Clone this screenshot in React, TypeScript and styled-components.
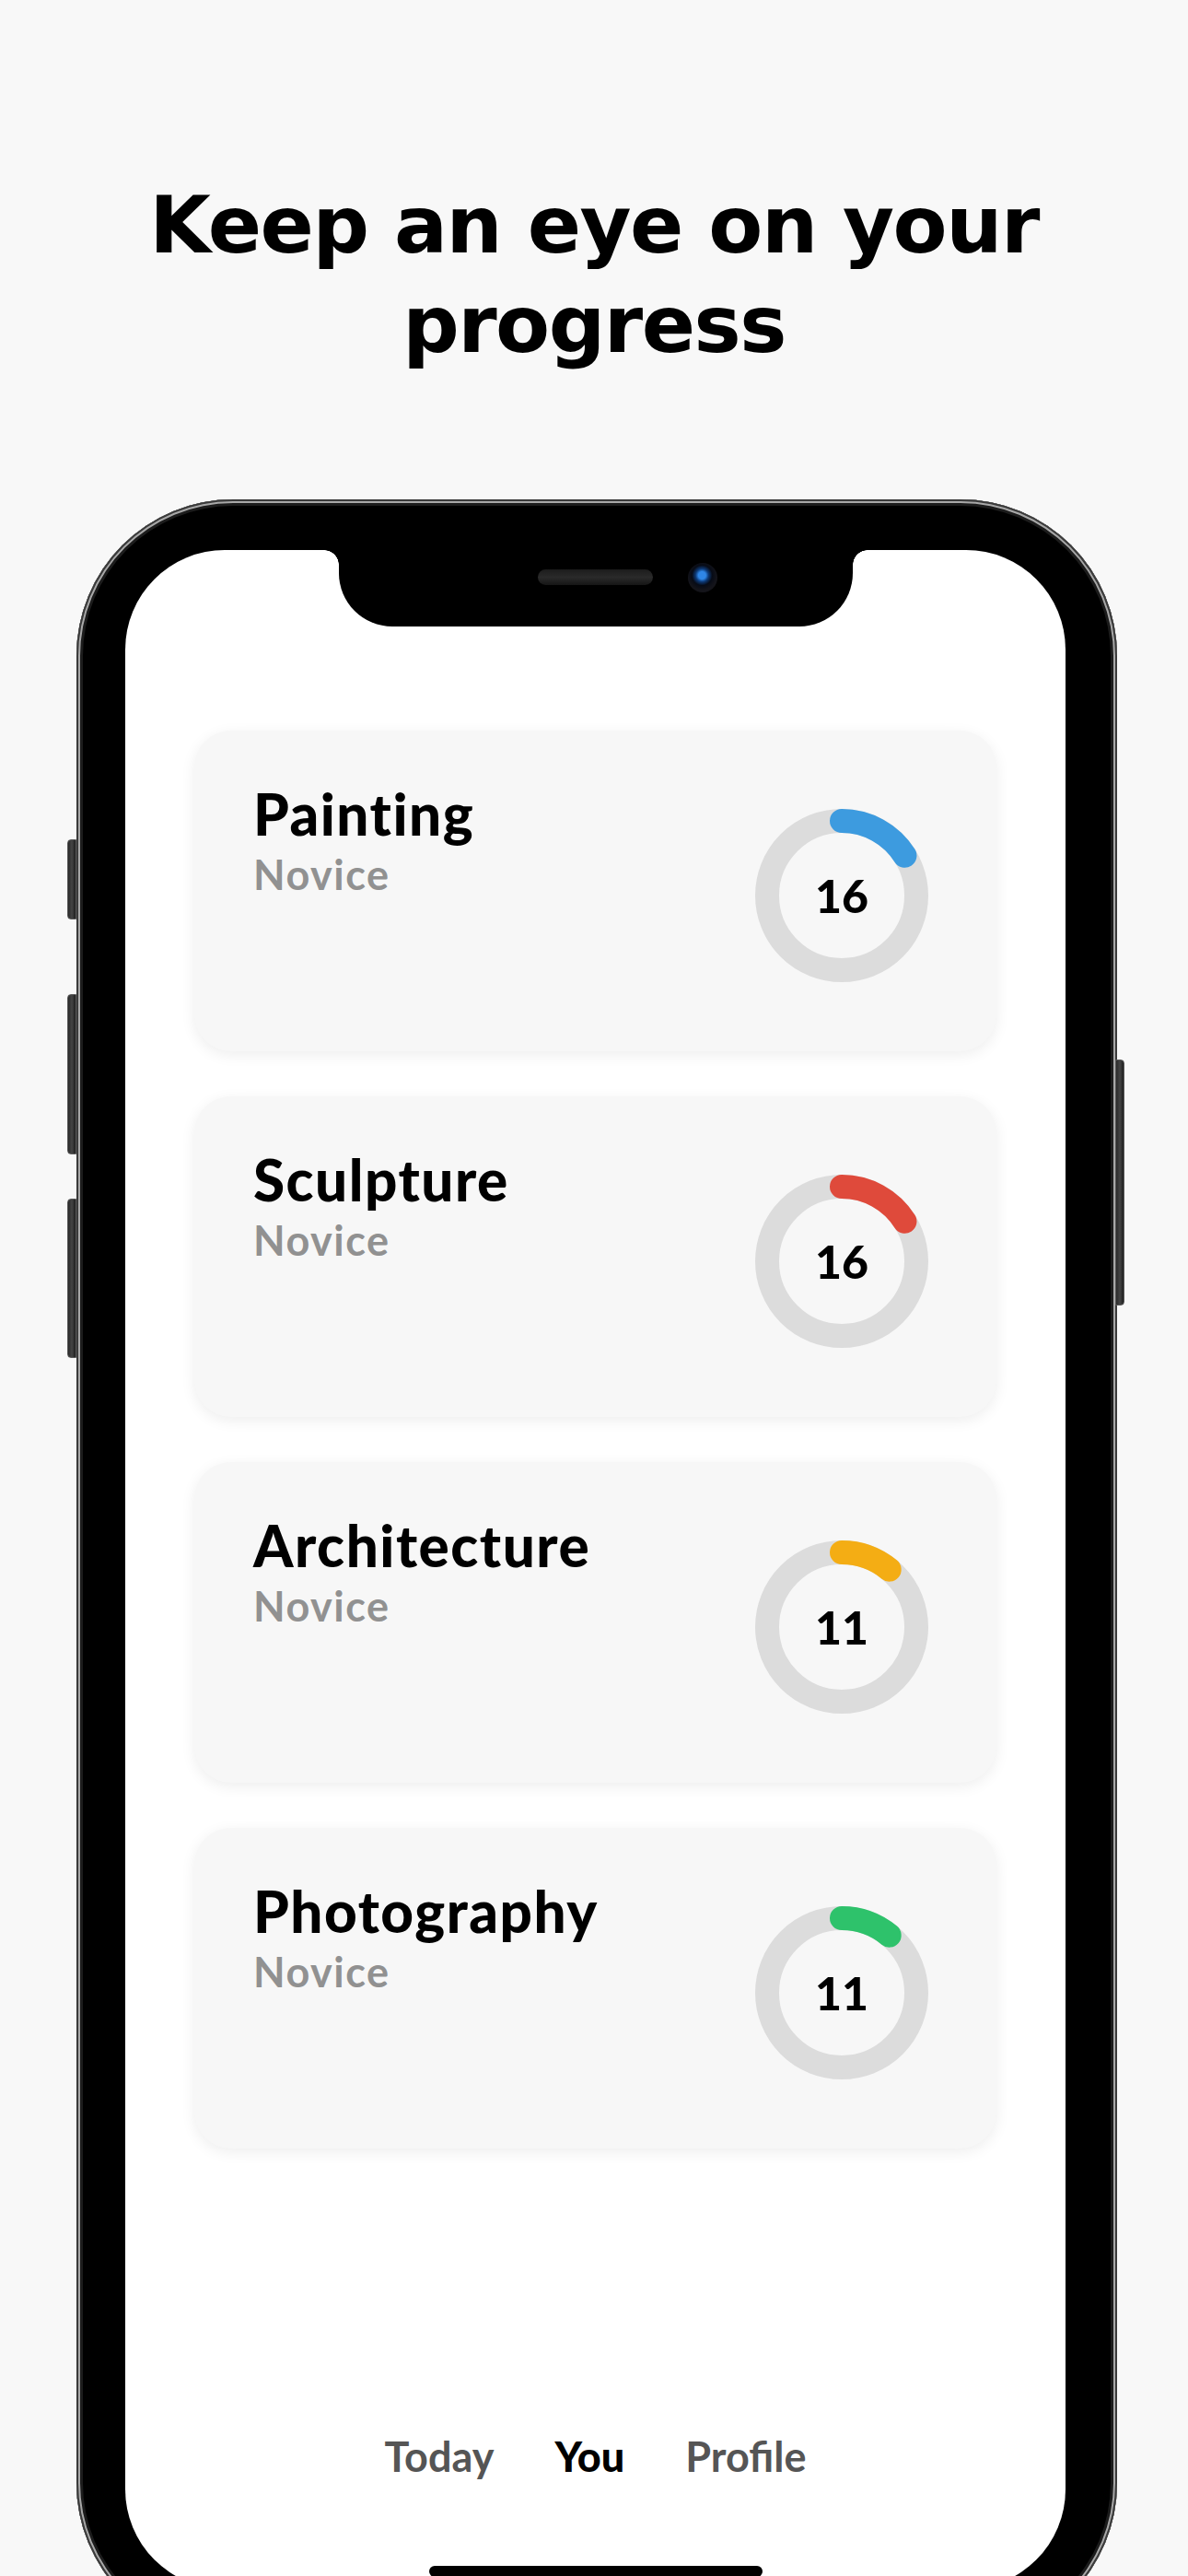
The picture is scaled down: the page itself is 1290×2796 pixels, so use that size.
import styled, {createGlobalStyle} from 'styled-components'

interface Skill {
  name: string
  level: string
  value: number
  color: string
}

const skills: Skill[] = [
  {name: 'Painting', level: 'Novice', value: 16, color: '#3d9bdf'},
  {name: 'Sculpture', level: 'Novice', value: 16, color: '#df4a3b'},
  {name: 'Architecture', level: 'Novice', value: 11, color: '#f4ad14'},
  {name: 'Photography', level: 'Novice', value: 11, color: '#2ec26b'},
]

const tabs = ['Today', 'You', 'Profile']

const RING = 188
const STROKE = 26

const ProgressRing = ({value, color}: {value: number; color: string}) => {
  const r = (RING - STROKE) / 2
  const c = 2 * Math.PI * r
  return (
    <Ring>
      <svg width={RING} height={RING} viewBox={`0 0 ${RING} ${RING}`}>
        <circle cx={RING / 2} cy={RING / 2} r={r} fill="none" stroke="#dcdcdc" strokeWidth={STROKE} />
        <circle
          cx={RING / 2}
          cy={RING / 2}
          r={r}
          fill="none"
          stroke={color}
          strokeWidth={STROKE}
          strokeLinecap="round"
          strokeDasharray={`${(value / 100) * c} ${c}`}
          transform={`rotate(-90 ${RING / 2} ${RING / 2})`}
        />
      </svg>
      <RingValue>{value}</RingValue>
    </Ring>
  )
}

const SkillCard = ({skill}: {skill: Skill}) => (
  <Card>
    <Info>
      <Name>{skill.name}</Name>
      <Level>{skill.level}</Level>
    </Info>
    <ProgressRing value={skill.value} color={skill.color} />
  </Card>
)

export default function App() {
  return (
    <>
      <GlobalStyle />
      <Page>
        <Heading>Keep an eye on your progress</Heading>
        <Phone>
          <SideButton $side="left" $top={369} $height={87} />
          <SideButton $side="left" $top={537} $height={174} />
          <SideButton $side="left" $top={759} $height={173} />
          <SideButton $side="right" $top={608} $height={267} />
          <Screen>
            <Notch>
              <Speaker />
              <Camera />
            </Notch>
            <CardList>
              {skills.map(s => (
                <SkillCard key={s.name} skill={s} />
              ))}
            </CardList>
            <TabBar>
              {tabs.map(t => (
                <Tab key={t} $active={t === 'You'}>
                  {t}
                </Tab>
              ))}
            </TabBar>
            <HomeIndicator />
          </Screen>
        </Phone>
      </Page>
    </>
  )
}

const GlobalStyle = createGlobalStyle`
  html, body {
    margin: 0;
    height: 2796px;
    overflow: hidden;
    background: #f8f8f8;
  }
`
const Page = styled.main`
  display: flex;
  flex-direction: column;
  align-items: center;
  padding-top: 190px;
  font-family: Lato, 'Noto Sans', sans-serif;
`
const Heading = styled.h1`
  margin: 0;
  max-width: 1040px;
  font-family: 'DejaVu Sans', sans-serif;
  font-size: 86px;
  font-weight: 700;
  line-height: 108px;
  letter-spacing: -1.5px;
  text-align: center;
  color: #000;
`
const Phone = styled.div`
  position: relative;
  box-sizing: border-box;
  width: 1130px;
  margin: 136px 0 0 6px;
  padding: 55px 56px 55px 53px;
  border-radius: 170px;
  background: #000;
  box-shadow:
    inset 0 0 0 2px #3a3a3a,
    inset 0 0 0 4px #a8a8a8,
    inset 0 0 0 7px #1c1c1c;
`
const SideButton = styled.div<{$side: 'left' | 'right'; $top: number; $height: number}>`
  position: absolute;
  top: ${p => p.$top}px;
  ${p => (p.$side === 'left' ? 'left: -10px;' : 'right: -8px;')}
  box-sizing: border-box;
  width: 10px;
  height: ${p => p.$height}px;
  border: 1px solid #5a5a5a;
  border-radius: ${p => (p.$side === 'left' ? '4px 0 0 4px' : '0 4px 4px 0')};
  background: linear-gradient(90deg, #2a2a2a, #454545, #1e1e1e);
`
const Screen = styled.div`
  position: relative;
  box-sizing: border-box;
  height: 2213px;
  display: flex;
  flex-direction: column;
  padding: 196px 75px 13px;
  background: #fff;
  border-radius: 108px;
`
const Notch = styled.div`
  position: absolute;
  top: 0;
  left: 50%;
  transform: translateX(-50%);
  width: 558px;
  height: 83px;
  display: flex;
  justify-content: center;
  padding-top: 21px;
  box-sizing: border-box;
  background: #000;
  border-radius: 0 0 58px 58px;

  &::before,
  &::after {
    content: '';
    position: absolute;
    top: 0;
    width: 16px;
    height: 16px;
  }
  &::before {
    left: -16px;
    background: radial-gradient(circle at 0 100%, transparent 15.5px, #000 16px);
  }
  &::after {
    right: -16px;
    background: radial-gradient(circle at 100% 100%, transparent 15.5px, #000 16px);
  }
`
const Speaker = styled.div`
  width: 125px;
  height: 17px;
  border-radius: 9px;
  background: linear-gradient(180deg, #1c1c1c, #2a2a2a 50%, #161616);
`
const Camera = styled.div`
  position: absolute;
  top: 14px;
  left: calc(50% + 100px);
  width: 32px;
  height: 32px;
  border-radius: 50%;
  background: radial-gradient(circle at 48% 42%, #2f86e6 0 4px, #0d3a78 7px, #070b16 11px, #14141a 16px);
`
const CardList = styled.div`
  display: flex;
  flex-direction: column;
  gap: 49px;
`
const Card = styled.article`
  box-sizing: border-box;
  height: 348px;
  display: flex;
  align-items: center;
  justify-content: space-between;
  padding: 0 74px 0 64px;
  background: #f7f7f7;
  border-radius: 40px;
  box-shadow: 0 4px 16px rgba(0, 0, 0, 0.07);
`
const Info = styled.div`
  align-self: flex-start;
  display: flex;
  flex-direction: column;
  padding-top: 59px;
`
const Name = styled.h3`
  margin: 0;
  font-size: 62px;
  font-weight: 900;
  line-height: 62px;
  letter-spacing: 1.5px;
  color: #000;
`
const Level = styled.span`
  margin-top: 13px;
  font-size: 45px;
  font-weight: 700;
  line-height: 44px;
  letter-spacing: 1.5px;
  color: #919191;
`
const Ring = styled.div`
  display: grid;
  place-items: center;
  margin-top: 10px;

  & > * {
    grid-area: 1 / 1;
  }
`
const RingValue = styled.span`
  font-size: 50px;
  font-weight: 900;
  color: #000;
`
const TabBar = styled.nav`
  margin-top: auto;
  display: flex;
  justify-content: center;
  gap: 66px;
`
const Tab = styled.span<{$active?: boolean}>`
  font-size: 45px;
  line-height: 45px;
  font-weight: ${p => (p.$active ? 900 : 700)};
  color: ${p => (p.$active ? '#000' : '#555')};
`
const HomeIndicator = styled.div`
  align-self: center;
  width: 362px;
  height: 12px;
  margin-top: 96px;
  border-radius: 6px;
  background: #000;
`
